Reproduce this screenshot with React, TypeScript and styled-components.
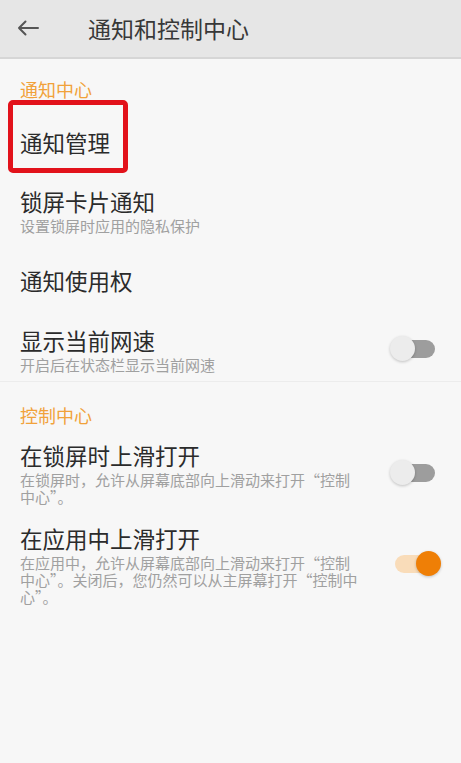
import React from "react";
import styled, { createGlobalStyle } from "styled-components";

const Global = createGlobalStyle`
  html, body { margin: 0; padding: 0; background: #f7f7f7; }
  body { font-family: "Noto Sans CJK SC", "Noto Sans", sans-serif; }
  * { box-sizing: border-box; }
`;

const Screen = styled.div`
  width: 461px;
  height: 763px;
  background: #f7f7f7;
  display: flex;
  flex-direction: column;
  overflow: hidden;
`;

const Header = styled.header`
  height: 59px;
  flex: none;
  background: #e6e6e6;
  border-bottom: 2px solid #d6d6d6;
  display: flex;
  align-items: center;
  padding: 0 0 2px 16px;
`;

const BackButton = styled.div`
  width: 24px;
  height: 16px;
  display: flex;
  align-items: center;
  justify-content: center;
  margin-right: 48px;
`;

const HeaderTitle = styled.h1`
  margin: 0;
  font-size: 23px;
  font-weight: 400;
  color: #383838;
  line-height: 30px;
`;

const Body = styled.main`
  display: flex;
  flex-direction: column;
`;

const SectionTitle = styled.div<{ $top: number; $bottom: number }>`
  padding: ${(p) => p.$top}px 20px ${(p) => p.$bottom}px;
  font-size: 18px;
  line-height: 24px;
  color: #f1a23a;
`;

const Row = styled.div<{ $top: number; $bottom: number; $divider?: boolean }>`
  position: relative;
  display: flex;
  align-items: center;
  padding: ${(p) => p.$top}px 26px ${(p) => p.$bottom}px 20px;
  border-bottom: ${(p) => (p.$divider ? "1px solid #ececec" : "none")};
`;

const TextCol = styled.div`
  flex: 0 1 340px;
  display: flex;
  flex-direction: column;
`;

const Title = styled.div`
  font-size: 22.5px;
  line-height: 30px;
  color: #2b2b2b;
`;

const Desc = styled.div`
  margin-top: 1px;
  font-size: 15px;
  line-height: 17px;
  color: #a0a0a0;
`;

const Highlight = styled.div`
  position: absolute;
  left: 8px;
  top: -12px;
  width: 120px;
  height: 73px;
  border: 5px solid #e2121b;
  border-radius: 5px;
  pointer-events: none;
`;

const Track = styled.div<{ $on: boolean }>`
  position: relative;
  width: 40px;
  height: 18px;
  border-radius: 9px;
  margin-left: auto;
  flex: none;
  background: ${(p) => (p.$on ? "#f9dcb9" : "#9d9d9d")};
`;

const Knob = styled.div<{ $on: boolean }>`
  position: absolute;
  top: -4px;
  left: ${(p) => (p.$on ? "21px" : "-5px")};
  width: 25px;
  height: 25px;
  border-radius: 50%;
  background: ${(p) => (p.$on ? "#ef7f06" : "#ececec")};
  box-shadow: 0 1px 3px rgba(0, 0, 0, 0.22);
`;

const Toggle = ({ on }: { on: boolean }) => (
  <Track $on={on}>
    <Knob $on={on} />
  </Track>
);

const BackArrow = () => (
  <svg width="24" height="16" viewBox="0 0 24 16" fill="none">
    <path
      d="M22 8H3M9.5 1.5L3 8l6.5 6.5"
      stroke="#555"
      strokeWidth="2"
      strokeLinecap="round"
      strokeLinejoin="round"
    />
  </svg>
);

export default function App() {
  return (
    <Screen>
      <Global />
      <Header>
        <BackButton>
          <BackArrow />
        </BackButton>
        <HeaderTitle>通知和控制中心</HeaderTitle>
      </Header>
      <Body>
        <SectionTitle $top={18} $bottom={11}>通知中心</SectionTitle>
        <Row $top={15} $bottom={14}>
          <TextCol>
            <Title>通知管理</Title>
          </TextCol>
          <Highlight />
        </Row>
        <Row $top={15} $bottom={15}>
          <TextCol>
            <Title>锁屏卡片通知</Title>
            <Desc>设置锁屏时应用的隐私保护</Desc>
          </TextCol>
        </Row>
        <Row $top={16} $bottom={15}>
          <TextCol>
            <Title>通知使用权</Title>
          </TextCol>
        </Row>
        <Row $top={15} $bottom={8} $divider>
          <TextCol>
            <Title>显示当前网速</Title>
            <Desc>开启后在状态栏显示当前网速</Desc>
          </TextCol>
          <Toggle on={false} />
        </Row>
        <SectionTitle $top={21} $bottom={0}>控制中心</SectionTitle>
        <Row $top={13} $bottom={9}>
          <TextCol>
            <Title>在锁屏时上滑打开</Title>
            <Desc>在锁屏时，允许从屏幕底部向上滑动来打开“控制中心”。</Desc>
          </TextCol>
          <Toggle on={false} />
        </Row>
        <Row $top={9} $bottom={9}>
          <TextCol>
            <Title>在应用中上滑打开</Title>
            <Desc>
              在应用中，允许从屏幕底部向上滑动来打开“控制中心”。关闭后，您仍然可以从主屏幕打开“控制中心”。
            </Desc>
          </TextCol>
          <Toggle on={true} />
        </Row>
      </Body>
    </Screen>
  );
}
